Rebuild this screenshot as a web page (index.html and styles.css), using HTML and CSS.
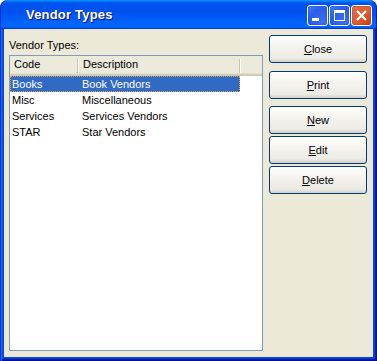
FILE: index.html
```html
<!DOCTYPE html>
<html lang="en">
<head>
    <meta charset="UTF-8">
    <title>Vendor Types</title>
    <link rel="stylesheet" href="styles.css">
</head>
<body>
    <div class="window">
        <div class="titlebar">
            <span class="title">Vendor Types</span>
            <div class="tbtns">
                <div class="tbtn min"><svg width="21" height="21"><rect x="5" y="13" width="7" height="3" fill="#fff"/></svg></div>
                <div class="tbtn max"><svg width="21" height="21"><rect x="5.5" y="5.5" width="10" height="10" fill="none" stroke="#fff"/><rect x="5" y="5" width="11" height="3" fill="#fff"/></svg></div>
                <div class="tbtn close"><svg width="21" height="21"><path d="M6 6 L15 15 M15 6 L6 15" stroke="#fff" stroke-width="2.2"/></svg></div>
            </div>
        </div>
        <div class="frame">
            <div class="client">
                <div class="left">
                    <div class="label">Vendor Types:</div>
                    <div class="listbox">
                        <div class="header">
                            <div class="hcell c1">Code</div>
                            <div class="hcell c2">Description</div>
                        </div>
                        <div class="row sel"><span class="c1">Books</span><span class="c2">Book Vendors</span></div>
                        <div class="row"><span class="c1">Misc</span><span class="c2">Miscellaneous</span></div>
                        <div class="row"><span class="c1">Services</span><span class="c2">Services Vendors</span></div>
                        <div class="row"><span class="c1">STAR</span><span class="c2">Star Vendors</span></div>
                    </div>
                </div>
                <div class="right">
                    <div class="btn"><u>C</u>lose</div>
                    <div class="btn b-print"><u>P</u>rint</div>
                    <div class="btn b-new"><u>N</u>ew</div>
                    <div class="btn b-next"><u>E</u>dit</div>
                    <div class="btn b-next"><u>D</u>elete</div>
                </div>
            </div>
        </div>
    </div>
</body>
</html>
```

FILE: styles.css
```css
*{margin:0;padding:0;box-sizing:border-box;}

body{background:#fff;font-family:"Liberation Sans",Arial,sans-serif;font-size:11px;color:#000;}

.window{width:377px;height:361px;display:flex;flex-direction:column;}

.titlebar{
    height:29px;flex:none;
    display:flex;align-items:center;justify-content:space-between;
    border-radius:8px 8px 0 0;
    background:linear-gradient(to bottom,#0997ff 0%,#0053ee 10%,#0050ee 40%,#0066ff 86%,#0066ff 92%,#005bff 95%,#003dd7 97%,#003dd7 100%);
    box-shadow:inset 1px 0 #0831d9, inset -1px 0 #001ea0;
}

.title{
    margin-left:26px;
    color:#fff;font-weight:bold;font-size:13px;letter-spacing:0.2px;
    text-shadow:1px 1px #0f1089;
}

.tbtns{display:flex;gap:1px;margin-right:5px;margin-top:2px;}

.tbtn{
    width:21px;height:21px;border:1px solid #fff;border-radius:3px;
    display:flex;align-items:center;justify-content:center;
}
.tbtn svg{display:block;margin:-1px;}

.min,.max{background:radial-gradient(circle at 80% 85%,#3c6ff0 0%,#3468ec 30%,#2a5de6 60%,#4a82fa 100%);box-shadow:inset 0 0 2px #1b46c9;}
.close{background:radial-gradient(circle at 85% 85%,#cc4614 0%,#db5a2d 40%,#e4744d 100%);box-shadow:inset 0 0 2px #a8300c;}

.frame{
    flex:1;display:flex;
    padding:0 4px 4px 4px;
    background:#0842d8;
    box-shadow:inset 1px 0 #0831d9, inset 2px 0 #166aee, inset -1px -1px #00138c, inset -2px -2px #001ea0, inset 3px 0 #0855dd;
}

.client{flex:1;background:#ece9d8;display:flex;gap:6px;padding:0 6px 6px 5px;}

.left{flex:1;display:flex;flex-direction:column;}

.label{margin-top:9px;margin-bottom:3px;line-height:14px;}

.listbox{flex:1;background:#fff;border:1px solid #7f9db9;}

.header{
    height:20px;display:flex;
    background:#ebeadb;
    box-shadow:inset 0 -1px #cbc7b8, inset 0 -2px #d6d2c2, inset 0 -3px #e2decd;
}

.hcell{position:relative;line-height:17px;}
.hcell.c1{padding-left:4px;}
.hcell.c2{padding-left:5px;}
.hcell::after{
    content:"";position:absolute;right:0;top:3px;bottom:3px;width:1px;
    background:#c7c5b2;box-shadow:1px 0 #fff;
}

.c1{width:68px;flex:none;}
.c2{width:162px;flex:none;}

.row{display:flex;height:16px;line-height:16px;}
.row .c1{padding-left:2px;}
.row .c2{padding-left:4px;}
.row span{white-space:nowrap;}

.row.sel{width:230px;background:#316ac5;color:#fff;outline:1px dotted #d9a649;outline-offset:-1px;}

.right{width:98px;flex:none;padding-top:6px;display:flex;flex-direction:column;}

.btn{
    height:28px;
    display:flex;align-items:center;justify-content:center;
    border:1px solid #003c74;border-radius:3px;
    background:linear-gradient(to bottom,#ffffff 0%,#f4f3ee 40%,#ecebe6 85%,#d6d0c5 100%);
}
.btn u{text-underline-offset:1px;}

.b-print{margin-top:8px;}
.b-new{margin-top:7px;}
.b-next{margin-top:2px;}
```
